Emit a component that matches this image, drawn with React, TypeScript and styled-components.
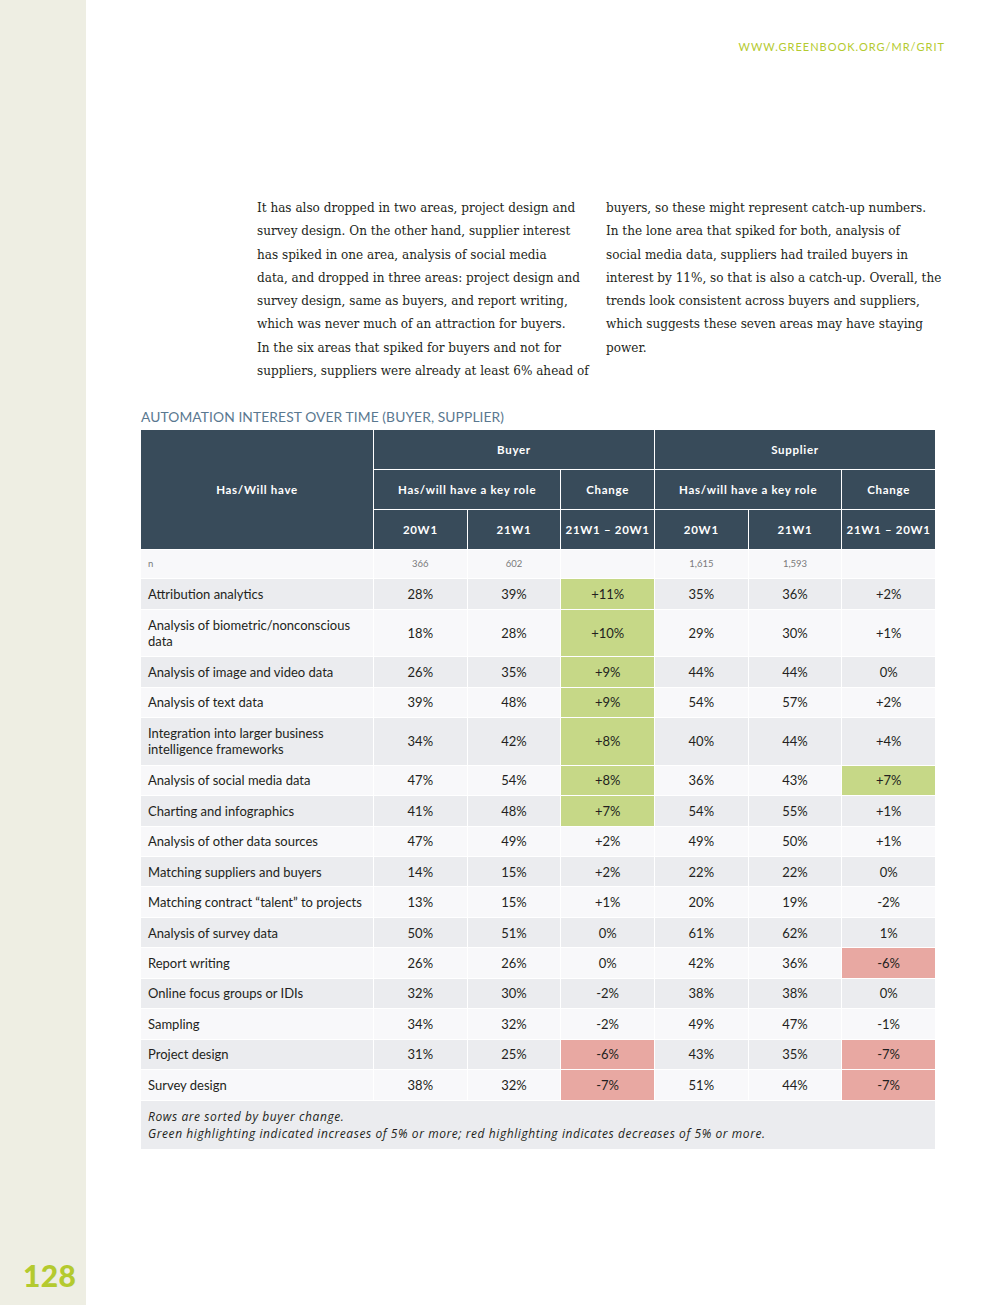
import React from "react";
import styled, { createGlobalStyle, css } from "styled-components";

const Global = createGlobalStyle`
  html, body { margin: 0; padding: 0; background: #ffffff; }
  body { font-family: "Lato", "Liberation Sans", sans-serif; }
  * { box-sizing: border-box; }
`;

const Page = styled.div`
  display: flex;
  width: 990px;
  min-height: 1305px;
  background: #ffffff;
`;

const Sidebar = styled.aside`
  width: 86px;
  flex: none;
  background: #eeeee3;
  display: flex;
  flex-direction: column;
  justify-content: flex-end;
  align-items: flex-start;
  padding: 0 0 13px 23px;
`;

const PageNum = styled.div`
  font-family: "Lato", sans-serif;
  font-weight: 900;
  font-size: 30px;
  line-height: 34px;
  color: #b4ca2f;
  letter-spacing: 0.3px;
`;

const Main = styled.main`
  flex: 1;
  display: flex;
  flex-direction: column;
  padding: 40px 55px 0 55px;
`;

const Url = styled.div`
  align-self: flex-end;
  margin-right: -8px;
  font-family: "Lato", sans-serif;
  font-size: 11px;
  line-height: 14px;
  letter-spacing: 1px;
  color: #b4ca2f;
`;

const Columns = styled.div`
  display: grid;
  grid-template-columns: 331px 331px;
  column-gap: 18px;
  margin: 143px 0 0 116px;
`;

const Para = styled.div`
  font-family: "DejaVu Serif", "Liberation Serif", serif;
  font-size: 12.05px;
  line-height: 23.3px;
  color: #231f20;
`;

const Line = styled.span`
  display: block;
  white-space: nowrap;
`;

const Title = styled.h2`
  margin: 26px 0 5px 0;
  font-family: "Lato", sans-serif;
  font-weight: 400;
  font-size: 13.8px;
  line-height: 16px;
  color: #5a7890;
  letter-spacing: 0.1px;
`;

const Grid = styled.div`
  display: grid;
  grid-template-columns: 232px repeat(6, 1fr);
  grid-template-rows: 39px 39px 39px;
  gap: 1px;
  background: #ffffff;
  width: 794px;
`;

const Head = styled.div<{ $span?: number; $rows?: number }>`
  background: #384b5a;
  color: #ffffff;
  font-family: "Lato", sans-serif;
  font-weight: 700;
  font-size: 11.5px;
  letter-spacing: 0.7px;
  display: flex;
  align-items: center;
  justify-content: center;
  text-align: center;
  white-space: nowrap;
  ${(p) => p.$span && css`grid-column: span ${p.$span};`}
  ${(p) => p.$rows && css`grid-row: span ${p.$rows};`}
`;

type Tone = "green" | "red" | undefined;

const Cell = styled.div<{
  $alt: boolean;
  $tone?: Tone;
  $label?: boolean;
  $small?: boolean;
  $tall?: boolean;
}>`
  min-height: ${(p) => (p.$small ? "28px" : p.$tall ? "46.5px" : "29.45px")};
  padding: 0 7px;
  display: flex;
  align-items: center;
  justify-content: ${(p) => (p.$label ? "flex-start" : "center")};
  font-family: "Lato", sans-serif;
  font-size: ${(p) => (p.$small ? "9.5px" : "13px")};
  line-height: 16px;
  color: ${(p) => (p.$small ? "#7a7a7a" : "#231f20")};
  white-space: nowrap;
  background: ${(p) =>
    p.$tone === "green" ? "#c6d887" : p.$tone === "red" ? "#e8a8a2" : p.$alt ? "#ebecef" : "#f8f8fa"};
`;

const Note = styled.div`
  grid-column: 1 / -1;
  background: #ebecef;
  padding: 7px 7px;
  font-family: "Open Sans", sans-serif;
  font-style: italic;
  font-size: 12px;
  letter-spacing: 0.58px;
  line-height: 17px;
  color: #231f20;
`;

type Row = {
  label: React.ReactNode;
  v: string[];
  bt?: Tone;
  st?: Tone;
  tall?: boolean;
};

const rows: Row[] = [
  { label: "Attribution analytics", v: ["28%", "39%", "+11%", "35%", "36%", "+2%"], bt: "green" },
  { label: <>Analysis of biometric/nonconscious<br />data</>, v: ["18%", "28%", "+10%", "29%", "30%", "+1%"], bt: "green", tall: true },
  { label: "Analysis of image and video data", v: ["26%", "35%", "+9%", "44%", "44%", "0%"], bt: "green" },
  { label: "Analysis of text data", v: ["39%", "48%", "+9%", "54%", "57%", "+2%"], bt: "green" },
  { label: <>Integration into larger business<br />intelligence frameworks</>, v: ["34%", "42%", "+8%", "40%", "44%", "+4%"], bt: "green", tall: true },
  { label: "Analysis of social media data", v: ["47%", "54%", "+8%", "36%", "43%", "+7%"], bt: "green", st: "green" },
  { label: "Charting and infographics", v: ["41%", "48%", "+7%", "54%", "55%", "+1%"], bt: "green" },
  { label: "Analysis of other data sources", v: ["47%", "49%", "+2%", "49%", "50%", "+1%"] },
  { label: "Matching suppliers and buyers", v: ["14%", "15%", "+2%", "22%", "22%", "0%"] },
  { label: "Matching contract \u201Ctalent\u201D to projects", v: ["13%", "15%", "+1%", "20%", "19%", "-2%"] },
  { label: "Analysis of survey data", v: ["50%", "51%", "0%", "61%", "62%", "1%"] },
  { label: "Report writing", v: ["26%", "26%", "0%", "42%", "36%", "-6%"], st: "red" },
  { label: "Online focus groups or IDIs", v: ["32%", "30%", "-2%", "38%", "38%", "0%"] },
  { label: "Sampling", v: ["34%", "32%", "-2%", "49%", "47%", "-1%"] },
  { label: "Project design", v: ["31%", "25%", "-6%", "43%", "35%", "-7%"], bt: "red", st: "red" },
  { label: "Survey design", v: ["38%", "32%", "-7%", "51%", "44%", "-7%"], bt: "red", st: "red" },
];

const leftLines = [
  "It has also dropped in two areas, project design and",
  "survey design. On the other hand, supplier interest",
  "has spiked in one area, analysis of social media",
  "data, and dropped in three areas: project design and",
  "survey design, same as buyers, and report writing,",
  "which was never much of an attraction for buyers.",
  "In the six areas that spiked for buyers and not for",
  "suppliers, suppliers were already at least 6% ahead of",
];

const rightLines = [
  "buyers, so these might represent catch-up numbers.",
  "In the lone area that spiked for both, analysis of",
  "social media data, suppliers had trailed buyers in",
  "interest by 11%, so that is also a catch-up. Overall, the",
  "trends look consistent across buyers and suppliers,",
  "which suggests these seven areas may have staying",
  "power.",
];

export default function App() {
  return (
    <>
      <Global />
      <Page>
        <Sidebar>
          <PageNum>128</PageNum>
        </Sidebar>
        <Main>
          <Url>WWW.GREENBOOK.ORG/MR/GRIT</Url>
          <Columns>
            <Para>
              {leftLines.map((l) => (
                <Line key={l}>{l}</Line>
              ))}
            </Para>
            <Para>
              {rightLines.map((l) => (
                <Line key={l}>{l}</Line>
              ))}
            </Para>
          </Columns>
          <Title>AUTOMATION INTEREST OVER TIME (BUYER, SUPPLIER)</Title>
          <Grid>
            <Head $rows={3}>Has/Will have</Head>
            <Head $span={3}>Buyer</Head>
            <Head $span={3}>Supplier</Head>
            <Head $span={2}>Has/will have a key role</Head>
            <Head>Change</Head>
            <Head $span={2}>Has/will have a key role</Head>
            <Head>Change</Head>
            <Head>20W1</Head>
            <Head>21W1</Head>
            <Head>21W1 – 20W1</Head>
            <Head>20W1</Head>
            <Head>21W1</Head>
            <Head>21W1 – 20W1</Head>

            <Cell $alt={false} $label $small>n</Cell>
            <Cell $alt={false} $small>366</Cell>
            <Cell $alt={false} $small>602</Cell>
            <Cell $alt={false} $small></Cell>
            <Cell $alt={false} $small>1,615</Cell>
            <Cell $alt={false} $small>1,593</Cell>
            <Cell $alt={false} $small></Cell>

            {rows.map((r, i) => {
              const alt = i % 2 === 0;
              return (
                <React.Fragment key={i}>
                  <Cell $alt={alt} $label $tall={r.tall}>
                    <span>{r.label}</span>
                  </Cell>
                  {r.v.map((val, j) => (
                    <Cell
                      key={j}
                      $alt={alt}
                      $tone={j === 2 ? r.bt : j === 5 ? r.st : undefined}
                    >
                      {val}
                    </Cell>
                  ))}
                </React.Fragment>
              );
            })}
            <Note>
              Rows are sorted by buyer change.
              <br />
              Green highlighting indicated increases of 5% or more; red highlighting indicates decreases of 5% or more.
            </Note>
          </Grid>
        </Main>
      </Page>
    </>
  );
}
